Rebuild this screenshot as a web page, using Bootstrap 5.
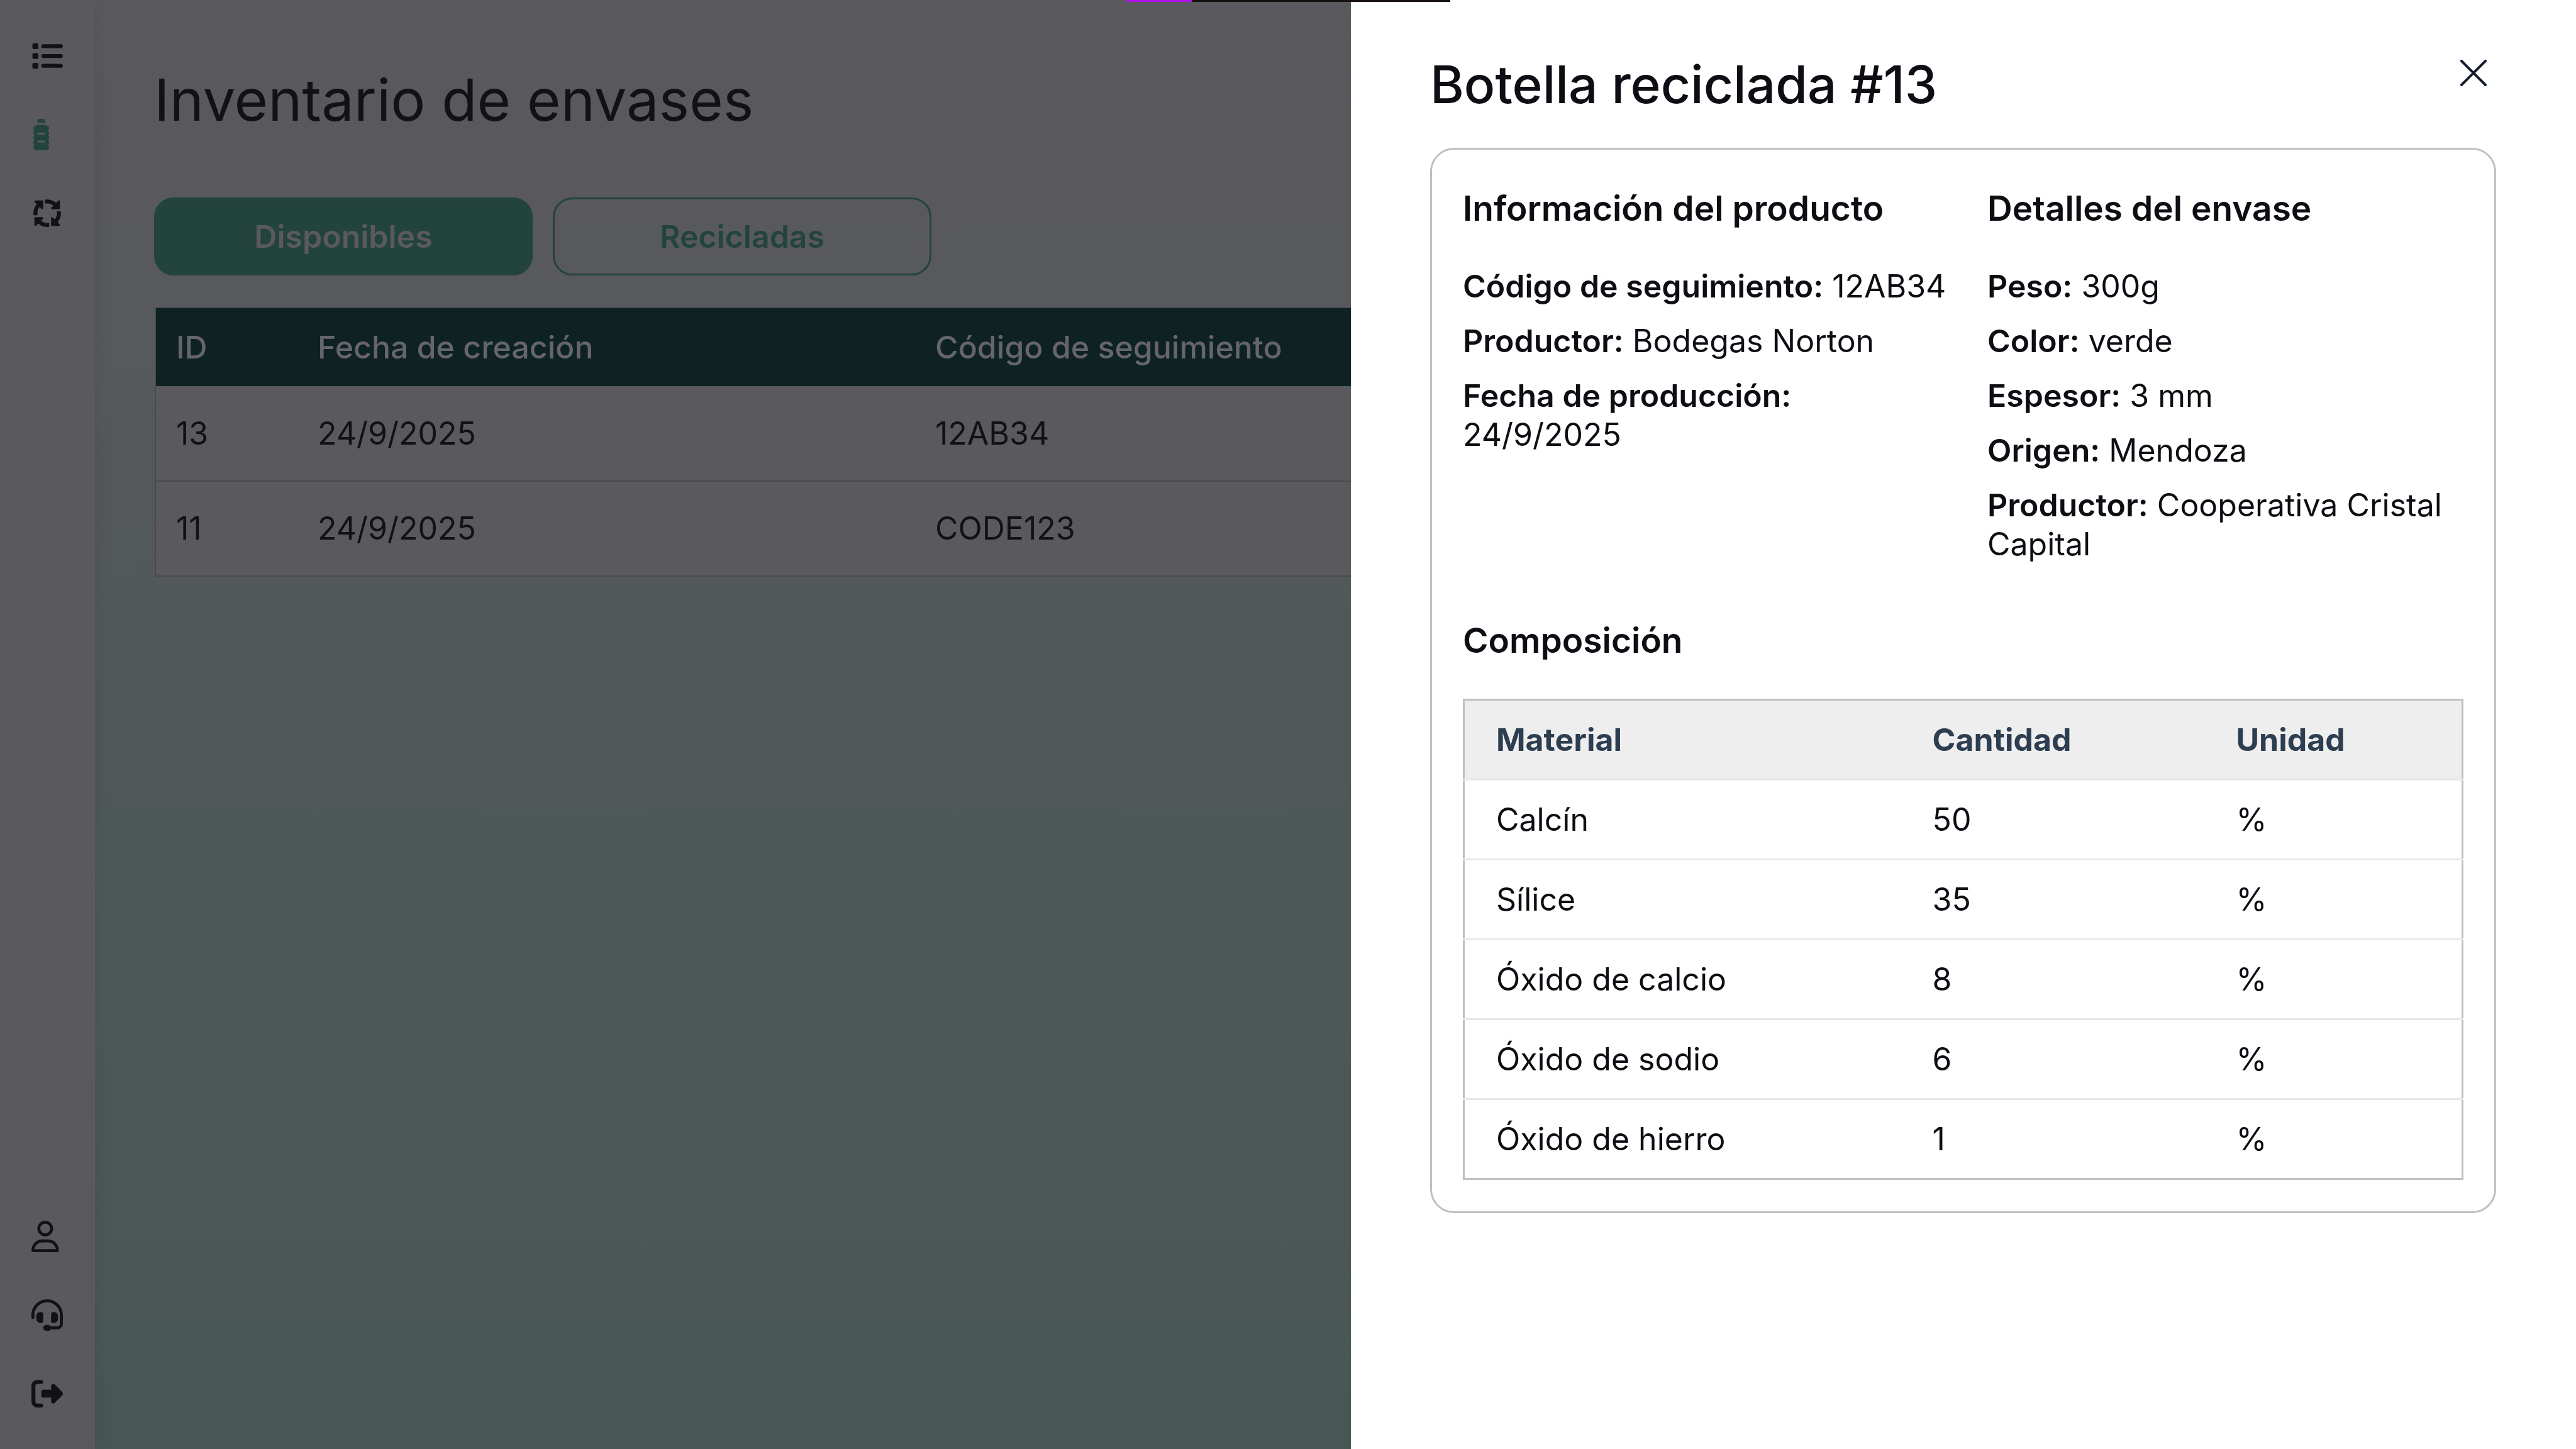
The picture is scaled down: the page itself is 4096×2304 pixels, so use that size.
<!DOCTYPE html>
<html lang="es">
<head>
<meta charset="utf-8">
<meta name="viewport" content="width=device-width, initial-scale=1">
<title>Inventario de envases</title>
<link href="https://cdn.jsdelivr.net/npm/bootstrap@5.3.0/dist/css/bootstrap.min.css" rel="stylesheet">
<style>
  :root { --ink: #0e0d14; --dim: #5a595e; --dim-ink: #121118; --green: #23443a; --rule: #c0c0c1; }
  body { font-family: Inter, "Liberation Sans", sans-serif; font-size: 50px; line-height: 61px; color: var(--ink); background: var(--dim); }
  .shell { min-height: 100vh; }
  .side-nav { width: 151px; padding: 26px 0; background: var(--dim); flex: none; position: relative; z-index: 1; box-shadow: 1px 0 26px rgba(0, 0, 0, .08); }
  .side-nav a { height: 125px; padding-left: 50px; color: var(--dim-ink); }
  .side-nav a.current { color: var(--green); }
  .side-nav svg { height: 50px; width: auto; fill: currentColor; }
  .stage { padding: 99px 96px 0 94px; background: linear-gradient(180deg, #5a595e 0%, #58595c 20%, #53585a 38%, #4f5858 58%, #4b5856 80%, #485655 100%); color: var(--dim-ink); min-width: 0; }
  .stage h1 { font-size: 92px; line-height: 120px; font-weight: 400; margin-bottom: 95px; }
  .tab-row { gap: 32px; }
  .tab-btn { width: 602px; height: 124px; border: 3px solid var(--green); border-radius: 31px; font-size: 50px; font-weight: 600; line-height: 61px; color: var(--green); background: transparent; padding: 0; }
  .tab-btn.on { background: var(--green); color: var(--dim); }
  .stock { margin: 50px 0 0 1px; border: 2px solid #4a494e; table-layout: fixed; width: 100%; border-collapse: collapse; background: var(--dim); }
  .stock th { background: #0e2224; color: #66656b; font-weight: 500; height: 125px; padding: 0 32px; }
  .stock td { height: 151px; padding: 0 32px; border-bottom: 2px solid #4a494e; }
  .stock .c-id { width: 226px; }
  .stock .c-date { width: 982px; }
  .drawer.offcanvas { --bs-offcanvas-width: 1948px; padding: 82px 127px 0 126px; background: #fff; color: var(--ink); border: 0; transition: none; }
  .drawer h2 { font-size: 82px; line-height: 106px; font-weight: 500; margin: 0; }
  .close-x { border: 0; background: none; padding: 13px 15px 0 0; line-height: 1; }
  .close-x svg { width: 42px; height: 42px; display: block; }
  .sheet { border: 3px solid var(--rule); border-radius: 38px; padding: 60px 49px 50px; margin-top: 47px; }
  .sheet h3 { font-size: 55px; line-height: 67px; font-weight: 600; margin: 0 0 59px; }
  .facts { display: grid; grid-template-columns: 772px 1fr; column-gap: 62px; }
  .facts p { margin: 0 0 25px; line-height: 62px; }
  .facts strong { font-weight: 600; }
  .sheet .mix-title { margin-top: 64px; }
  .mix { width: 100%; table-layout: fixed; border-collapse: collapse; border: 3px solid var(--rule); }
  .mix th, .mix td { height: 127px; padding: 0 50px; border-bottom: 3px solid #e8e8ec; }
  .mix tr:last-child td { border-bottom-color: var(--rule); }
  .mix th { background: #eee; color: #2c3e50; font-weight: 700; }
  .mix .c-mat { width: 695px; }
  .mix .c-qty { width: 483px; }
  .load-strip { position: absolute; z-index: 2000; top: 0; left: 1792px; width: 514px; height: 3px; background: #16100f; }
  .load-strip span { display: block; width: 103px; height: 3px; background: #b00ff0; }
</style>
</head>
<body>
<div class="load-strip"><span></span></div>
<div class="shell d-flex">
  <nav class="side-nav d-flex flex-column justify-content-between" aria-label="Principal">
    <div class="d-flex flex-column">
      <a href="#" class="d-flex align-items-center" aria-label="Listado"><svg viewBox="0 0 512 512"><path d="M40 48C26.7 48 16 58.7 16 72v48c0 13.3 10.7 24 24 24H88c13.3 0 24-10.7 24-24V72c0-13.3-10.7-24-24-24H40zM192 64c-17.7 0-32 14.3-32 32s14.3 32 32 32H480c17.7 0 32-14.3 32-32s-14.3-32-32-32H192zm0 160c-17.7 0-32 14.3-32 32s14.3 32 32 32H480c17.7 0 32-14.3 32-32s-14.3-32-32-32H192zm0 160c-17.7 0-32 14.3-32 32s14.3 32 32 32H480c17.7 0 32-14.3 32-32s-14.3-32-32-32H192zM16 232v48c0 13.3 10.7 24 24 24H88c13.3 0 24-10.7 24-24V232c0-13.3-10.7-24-24-24H40c-13.3 0-24 10.7-24 24zM40 368c-13.3 0-24 10.7-24 24v48c0 13.3 10.7 24 24 24H88c13.3 0 24-10.7 24-24V392c0-13.3-10.7-24-24-24H40z"/></svg></a>
      <a href="#" class="current d-flex align-items-center" aria-label="Envases"><svg viewBox="0 0 320 512"><path d="M120 0h80c13.3 0 24 10.7 24 24V64H96V24c0-13.3 10.7-24 24-24zM32 151.7c0-15.6 9-29.8 23.2-36.5l24.4-11.4c11-5.1 23-7.8 35.1-7.8h90.6c12.1 0 24.1 2.7 35.1 7.8l24.4 11.4c14.1 6.6 23.2 20.8 23.2 36.5c0 14.4-7.5 27-18.9 34.1c11.5 8.8 18.9 22.6 18.9 38.2c0 16.7-8.5 31.4-21.5 40c12.9 8.6 21.5 23.3 21.5 40s-8.5 31.4-21.5 40c12.9 8.6 21.5 23.3 21.5 40s-8.5 31.4-21.5 40c12.9 8.6 21.5 23.3 21.5 40c0 26.5-21.5 48-48 48H80c-26.5 0-48-21.5-48-48c0-16.7 8.5-31.4 21.5-40C40.5 415.4 32 400.7 32 384s8.5-31.4 21.5-40C40.5 335.4 32 320.7 32 304s8.5-31.4 21.5-40C40.5 255.4 32 240.7 32 224c0-15.6 7.4-29.4 18.9-38.2C39.5 178.7 32 166.1 32 151.7zM96 240c0 8.8 7.2 16 16 16h96c8.8 0 16-7.2 16-16s-7.2-16-16-16H112c-8.8 0-16 7.2-16 16zm16 112c-8.8 0-16 7.2-16 16s7.2 16 16 16h96c8.8 0 16-7.2 16-16s-7.2-16-16-16H112z"/></svg></a>
      <a href="#" class="d-flex align-items-center" aria-label="Reciclaje"><svg viewBox="0 0 512 512"><path d="M256 96c38.4 0 73.7 13.5 101.3 36.1l-32.6 32.6c-4.6 4.6-5.9 11.5-3.5 17.4s8.3 9.9 14.8 9.9H448c8.8 0 16-7.2 16-16V64c0-6.5-3.9-12.3-9.9-14.8s-12.9-1.1-17.4 3.5l-34 34C363.4 52.6 312.1 32 256 32c-10.9 0-21.5 .8-32 2.3V99.2c10.3-2.1 21-3.2 32-3.2zM132.1 154.7l32.6 32.6c4.6 4.6 11.5 5.9 17.4 3.5s9.9-8.3 9.9-14.8V64c0-8.8-7.2-16-16-16H64c-6.5 0-12.3 3.9-14.8 9.9s-1.1 12.9 3.5 17.4l34 34C52.6 148.6 32 199.9 32 256c0 10.9 .8 21.5 2.3 32H99.2c-2.1-10.3-3.2-21-3.2-32c0-38.4 13.5-73.7 36.1-101.3zM477.7 224H412.8c2.1 10.3 3.2 21 3.2 32c0 38.4-13.5 73.7-36.1 101.3l-32.6-32.6c-4.6-4.6-11.5-5.9-17.4-3.5s-9.9 8.3-9.9 14.8V448c0 8.8 7.2 16 16 16H448c6.5 0 12.3-3.9 14.8-9.9s1.1-12.9-3.5-17.4l-34-34C459.4 363.4 480 312.1 480 256c0-10.9-.8-21.5-2.3-32zM256 416c-38.4 0-73.7-13.5-101.3-36.1l32.6-32.6c4.6-4.6 5.9-11.5 3.5-17.4s-8.3-9.9-14.8-9.9H64c-8.8 0-16 7.2-16 16v112c0 6.5 3.9 12.3 9.9 14.8s12.9 1.1 17.4-3.5l34-34C148.6 459.4 199.9 480 256 480c10.9 0 21.5-.8 32-2.3V412.8c-10.3 2.1-21 3.2-32 3.2z"/></svg></a>
    </div>
    <div class="d-flex flex-column">
      <a href="#" class="d-flex align-items-center" aria-label="Perfil"><svg viewBox="0 0 448 512"><path d="M304 128a80 80 0 1 0 -160 0 80 80 0 1 0 160 0zM96 128a128 128 0 1 1 256 0A128 128 0 1 1 96 128zM49.3 464H398.7c-8.9-63.3-63.3-112-129-112H178.3c-65.7 0-120.1 48.7-129 112zM0 482.3C0 383.8 79.8 304 178.3 304h91.4C368.2 304 448 383.8 448 482.3c0 16.4-13.3 29.7-29.7 29.7H29.7C13.3 512 0 498.7 0 482.3z"/></svg></a>
      <a href="#" class="d-flex align-items-center" aria-label="Soporte"><svg viewBox="0 0 512 512"><path d="M256 48C141.1 48 48 141.1 48 256v40c0 13.3-10.7 24-24 24s-24-10.7-24-24V256C0 114.6 114.6 0 256 0S512 114.6 512 256V400.1c0 48.6-39.4 88-88.1 88L313.6 488c-8.3 14.3-23.8 24-41.6 24H240c-26.5 0-48-21.5-48-48s21.5-48 48-48h32c17.8 0 33.3 9.7 41.6 24l110.4 .1c22.1 0 40-17.9 40-40V256c0-114.9-93.1-208-208-208zM144 208h16c17.7 0 32 14.3 32 32V352c0 17.7-14.3 32-32 32H144c-35.3 0-64-28.7-64-64V272c0-35.3 28.7-64 64-64zm224 0c35.3 0 64 28.7 64 64v48c0 35.3-28.7 64-64 64H352c-17.7 0-32-14.3-32-32V240c0-17.7 14.3-32 32-32h16z"/></svg></a>
      <a href="#" class="d-flex align-items-center" aria-label="Salir"><svg viewBox="0 0 512 512"><path d="M377.9 105.9L500.7 228.7c7.2 7.2 11.3 17.1 11.3 27.3s-4.1 20.1-11.3 27.3L377.9 406.1c-6.4 6.4-15 9.9-24 9.9c-18.7 0-33.9-15.2-33.9-33.9l0-62.1-128 0c-17.7 0-32-14.3-32-32l0-64c0-17.7 14.3-32 32-32l128 0 0-62.1c0-18.7 15.2-33.9 33.9-33.9c9 0 17.6 3.6 24 9.9zM160 96L96 96c-17.7 0-32 14.3-32 32l0 256c0 17.7 14.3 32 32 32l64 0c17.7 0 32 14.3 32 32s-14.3 32-32 32l-64 0c-53 0-96-43-96-96L0 128C0 75 43 32 96 32l64 0c17.7 0 32 14.3 32 32s-14.3 32-32 32z"/></svg></a>
    </div>
  </nav>
  <main class="stage flex-grow-1">
    <h1>Inventario de envases</h1>
    <div class="tab-row d-flex">
      <button type="button" class="tab-btn on">Disponibles</button>
      <button type="button" class="tab-btn">Recicladas</button>
    </div>
    <table class="stock">
      <colgroup><col class="c-id"><col class="c-date"><col></colgroup>
      <thead><tr><th>ID</th><th>Fecha de creación</th><th>Código de seguimiento</th></tr></thead>
      <tbody>
        <tr><td>13</td><td>24/9/2025</td><td>12AB34</td></tr>
        <tr><td>11</td><td>24/9/2025</td><td>CODE123</td></tr>
      </tbody>
    </table>
  </main>
</div>
<aside class="drawer offcanvas offcanvas-end show" tabindex="-1" data-bs-backdrop="false" data-bs-scroll="true" aria-labelledby="drawerTitle">
  <div class="d-flex justify-content-between align-items-start">
    <h2 id="drawerTitle">Botella reciclada #13</h2>
    <button type="button" class="close-x" aria-label="Cerrar"><svg viewBox="0 0 42 42" fill="none" stroke="#111a2c" stroke-width="4" stroke-linecap="round"><path d="M2 2L40 40M40 2L2 40"/></svg></button>
  </div>
  <section class="sheet">
    <div class="facts">
      <div>
        <h3>Información del producto</h3>
        <p><strong>Código de seguimiento:</strong> 12AB34</p>
        <p><strong>Productor:</strong> Bodegas Norton</p>
        <p><strong>Fecha de producción:</strong> 24/9/2025</p>
      </div>
      <div>
        <h3>Detalles del envase</h3>
        <p><strong>Peso:</strong> 300g</p>
        <p><strong>Color:</strong> verde</p>
        <p><strong>Espesor:</strong> 3 mm</p>
        <p><strong>Origen:</strong> Mendoza</p>
        <p><strong>Productor:</strong> Cooperativa Cristal Capital</p>
      </div>
    </div>
    <h3 class="mix-title">Composición</h3>
    <table class="mix">
      <colgroup><col class="c-mat"><col class="c-qty"><col></colgroup>
      <thead><tr><th>Material</th><th>Cantidad</th><th>Unidad</th></tr></thead>
      <tbody>
        <tr><td>Calcín</td><td>50</td><td>%</td></tr>
        <tr><td>Sílice</td><td>35</td><td>%</td></tr>
        <tr><td>Óxido de calcio</td><td>8</td><td>%</td></tr>
        <tr><td>Óxido de sodio</td><td>6</td><td>%</td></tr>
        <tr><td>Óxido de hierro</td><td>1</td><td>%</td></tr>
      </tbody>
    </table>
  </section>
</aside>
<script src="https://cdn.jsdelivr.net/npm/bootstrap@5.3.0/dist/js/bootstrap.bundle.min.js"></script>
</body>
</html>
